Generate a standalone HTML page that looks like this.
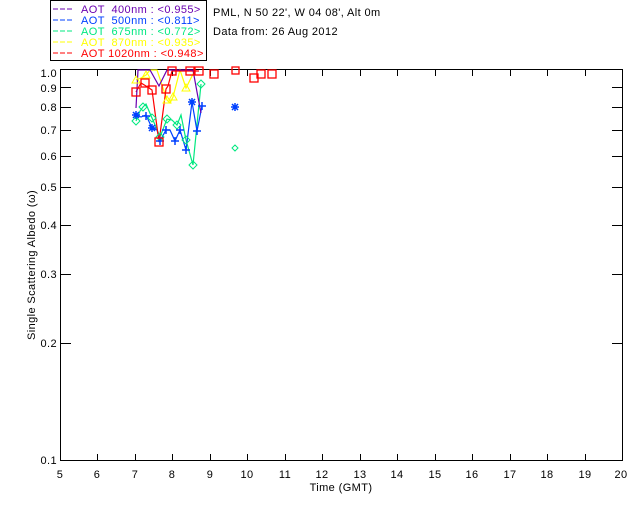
<!DOCTYPE html>
<html><head><style>
body{margin:0;background:#fff;}
svg text{font-family:"Liberation Sans",sans-serif;font-size:11px;letter-spacing:0.4px;}
</style></head><body>
<svg width="640" height="512" xmlns="http://www.w3.org/2000/svg">
<rect x="0" y="0" width="640" height="512" fill="#fff"/>
<rect x="50.5" y="0.5" width="156" height="60" fill="none" stroke="#000" stroke-width="1"/>
<g font-size="11">
<line x1="53" y1="9" x2="73" y2="9" stroke="#6a00b0" stroke-dasharray="5,2"/><text x="81" y="13" fill="#6a00b0" xml:space="preserve">AOT  400nm : &lt;0.955&gt;</text>
<line x1="53" y1="20" x2="73" y2="20" stroke="#0040ff" stroke-dasharray="5,2"/><text x="81" y="24" fill="#0040ff" xml:space="preserve">AOT  500nm : &lt;0.811&gt;</text>
<line x1="53" y1="31" x2="73" y2="31" stroke="#00e880" stroke-dasharray="5,2"/><text x="81" y="35" fill="#00e880" xml:space="preserve">AOT  675nm : &lt;0.772&gt;</text>
<line x1="53" y1="42" x2="73" y2="42" stroke="#ffff00" stroke-dasharray="5,2"/><text x="81" y="46" fill="#ffff00" xml:space="preserve">AOT  870nm : &lt;0.935&gt;</text>
<line x1="53" y1="53" x2="73" y2="53" stroke="#ff0000" stroke-dasharray="5,2"/><text x="81" y="57" fill="#ff0000" xml:space="preserve">AOT 1020nm : &lt;0.948&gt;</text>
</g>
<text x="213" y="16" fill="#000">PML, N 50 22', W 04 08', Alt 0m</text>
<text x="213" y="35" fill="#000">Data from: 26 Aug 2012</text>
<rect x="60.5" y="69.5" width="562" height="391" fill="none" stroke="#000"/>
<g stroke="#000">
<path d="M97.5 461v-7M135.5 461v-7M172.5 461v-7M210.5 461v-7M247.5 461v-7M285.5 461v-7M322.5 461v-7M360.5 461v-7M397.5 461v-7M435.5 461v-7M472.5 461v-7M510.5 461v-7M547.5 461v-7M585.5 461v-7"/>
<path d="M97.5 69v7M135.5 69v7M172.5 69v7M210.5 69v7M247.5 69v7M285.5 69v7M322.5 69v7M360.5 69v7M397.5 69v7M435.5 69v7M472.5 69v7M510.5 69v7M547.5 69v7M585.5 69v7"/>
<path d="M60 87.5h11M60 107.5h11M60 130.5h11M60 156.5h11M60 187.5h11M60 225.5h11M60 274.5h11M60 343.5h11"/>
<path d="M623 87.5h-11M623 107.5h-11M623 130.5h-11M623 156.5h-11M623 187.5h-11M623 225.5h-11M623 274.5h-11M623 343.5h-11"/>
</g>
<g fill="#000" text-anchor="end" font-size="11">
<text x="57" y="77">1.0</text><text x="57" y="92">0.9</text><text x="57" y="111">0.8</text><text x="57" y="134">0.7</text><text x="57" y="160">0.6</text><text x="57" y="191">0.5</text><text x="57" y="229">0.4</text><text x="57" y="278">0.3</text><text x="57" y="347">0.2</text><text x="57" y="464">0.1</text>
</g>
<g fill="#000" text-anchor="middle" font-size="11">
<text x="60" y="478">5</text><text x="97" y="478">6</text><text x="135" y="478">7</text><text x="172" y="478">8</text><text x="210" y="478">9</text><text x="247" y="478">10</text><text x="285" y="478">11</text><text x="322" y="478">12</text><text x="360" y="478">13</text><text x="397" y="478">14</text><text x="435" y="478">15</text><text x="472" y="478">16</text><text x="510" y="478">17</text><text x="547" y="478">18</text><text x="585" y="478">19</text><text x="621" y="478">20</text>
<text x="341" y="491">Time (GMT)</text>
<text transform="translate(35,265) rotate(-90)">Single Scattering Albedo (ω)</text>
</g>
<g fill="none" stroke-width="1.2">
<polyline stroke="#00e880" points="136,121 140,111 143,107 146,104 152,118 156,127 160,137 167,119 172,120 177,125 181,115 186,140 193,165 201,84"/>
<polyline stroke="#0040ff" points="136,115 141,117 146,115 152,128 157,130 160,141 166,130 170,130 175,141 180,130 186,150 192,102 197,131 202,106"/>
<polyline stroke="#ffff00" points="136,80 141,78 146,75 150,70 157,70 167,100 170,103 173,97 180,70 186,88 195,70"/>
<polyline stroke="#ff0000" points="136,92 141,83 146,86 152,90 159,142 166,89 168,86 172,71 180,71 190,71 199,71"/>
<polyline stroke="#6a00b0" points="136,108 138,70 150,70 159,86 167,70 193,70 197,92 201,113"/>
</g>
<g fill="none" stroke="#00e880"><path d="M136 117l4 4-4 4-4-4zM143 103l4 4-4 4-4-4zM152 114l4 4-4 4-4-4zM160 133l4 4-4 4-4-4zM167 115l4 4-4 4-4-4zM177 121l4 4-4 4-4-4zM186 136l4 4-4 4-4-4zM193 161l4 4-4 4-4-4zM201 80l4 4-4 4-4-4zM235 145l3 3-3 3-3-3z"/></g>
<g stroke="#0040ff" stroke-width="1.5"><path d="M132 115h8M136 111v8M133 112l6 6M139 112l-6 6M142 116h8M146 112v8M148 128h8M152 124v8M149 125l6 6M155 125l-6 6M156 141h8M160 137v8M162 130h8M166 126v8M171 141h8M175 137v8M176 130h8M180 126v8M182 150h8M186 146v8M188 102h8M192 98v8M189 99l6 6M195 99l-6 6M193 131h8M197 127v8M198 106h8M202 102v8M231 107h8M235 103v8M232 104l6 6M238 104l-6 6"/></g>
<g fill="none" stroke="#ffff00"><path d="M136 76l4 7h-8zM146 71l4 7h-8zM167 96l4 7h-8zM173 93l4 7h-8zM186 84l4 7h-8z"/></g>
<g fill="none" stroke="#ff0000" stroke-width="1.3"><rect x="132" y="88" width="8" height="8"/><rect x="141" y="79" width="8" height="8"/><rect x="148" y="86" width="8" height="8"/><rect x="155" y="138" width="8" height="8"/><rect x="162" y="85" width="8" height="8"/><rect x="168" y="67" width="8" height="8"/><rect x="186" y="67" width="8" height="8"/><rect x="195" y="67" width="8" height="8"/><rect x="210" y="70" width="8" height="8"/><rect x="232" y="67" width="7" height="7"/><rect x="250" y="74" width="8" height="8"/><rect x="257" y="70" width="8" height="8"/><rect x="268" y="70" width="8" height="8"/></g>
</svg>
</body></html>
